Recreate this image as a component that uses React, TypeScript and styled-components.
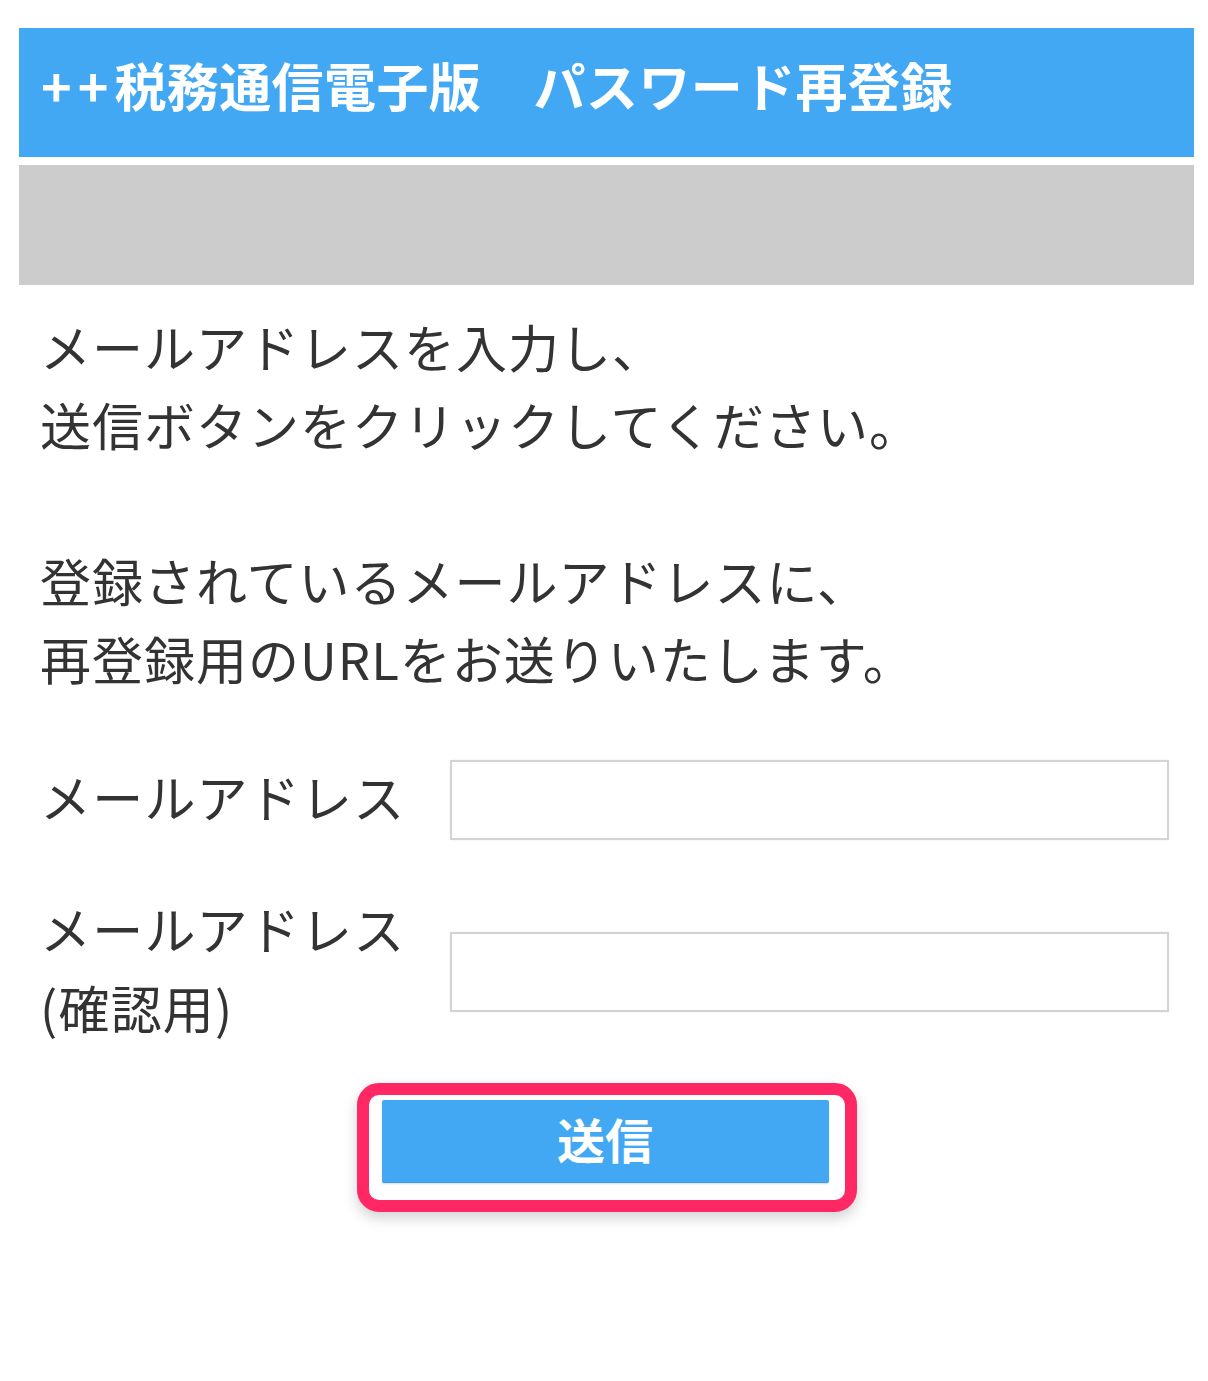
import React from 'react';
import styled, { createGlobalStyle } from 'styled-components';

const GlobalStyle = createGlobalStyle`
  html, body {
    margin: 0;
    padding: 0;
    background: #fff;
  }
  body {
    font-family: "Noto Sans CJK JP", "Noto Sans", sans-serif;
    color: #333;
  }
`;

const Page = styled.div`
  width: 1175px;
  margin: 28px 0 0 19px;
  padding-bottom: 160px;
`;

const TitleBar = styled.h1`
  box-sizing: border-box;
  margin: 0;
  height: 129px;
  display: flex;
  align-items: center;
  padding: 0 0 16px 22px;
  background: #42a8f4;
  color: #fff;
  font-size: 52px;
  font-weight: 700;
  letter-spacing: 0.4px;
  white-space: nowrap;
`;

const Plus = styled.span`
  letter-spacing: 6px;
`;

const SubBar = styled.div`
  margin-top: 8px;
  height: 120px;
  background: #cccccc;
`;

const Body = styled.div`
  padding: 22px 25px 0 21px;
`;

const Message = styled.p`
  margin: 0;
  font-size: 51px;
  line-height: 78px;
  letter-spacing: 1px;
  & + & {
    margin-top: 78px;
  }
`;

const Form = styled.form`
  margin-top: 63px;
  display: flex;
  flex-direction: column;
  gap: 57px;
`;

const Row = styled.div`
  display: flex;
  align-items: center;
`;

const Label = styled.label`
  width: 410px;
  flex-shrink: 0;
  margin-top: -8px;
  font-size: 51px;
  line-height: 79px;
  letter-spacing: 1.2px;
`;

const Field = styled.input`
  box-sizing: border-box;
  width: 719px;
  height: 80px;
  border: 2px solid #d4d4d4;
  box-shadow: 0 0 2px rgba(0, 0, 0, 0.08);
  background: #fff;
  font-size: 40px;
  padding: 0 12px;
  outline: none;
`;

const Actions = styled.div`
  margin-top: 36px;
  display: flex;
  justify-content: center;
  padding-left: 4px;
`;

// highlight frame drawn round the submit button
const Highlight = styled.div`
  padding: 5px 16px 17px 13px;
  border: 12px solid #ff2864;
  border-radius: 22px;
  background: #fff;
  box-shadow: 0 6px 14px rgba(0, 0, 0, 0.18);
`;

const SubmitButton = styled.button`
  display: block;
  width: 447px;
  height: 83px;
  padding: 0 0 8px;
  border: none;
  border-radius: 2px;
  background: #42a8f4;
  box-shadow: inset 0 -1px 0 rgba(0, 0, 0, 0.06), 0 1px 2px rgba(0, 0, 0, 0.15);
  color: #fff;
  font-family: inherit;
  font-size: 48px;
  font-weight: 700;
  cursor: pointer;
`;

export default function App() {
  return (
    <>
      <GlobalStyle />
      <Page>
        <TitleBar>
          <Plus>++</Plus>税務通信電子版　パスワード再登録
        </TitleBar>
        <SubBar />
        <Body>
          <Message>
            メールアドレスを入力し、
            <br />
            送信ボタンをクリックしてください。
          </Message>
          <Message>
            登録されているメールアドレスに、
            <br />
            再登録用のURLをお送りいたします。
          </Message>
          <Form onSubmit={e => e.preventDefault()}>
            <Row>
              <Label htmlFor="mail">メールアドレス</Label>
              <Field id="mail" type="email" />
            </Row>
            <Row>
              <Label htmlFor="mail-confirm">
                メールアドレス
                <br />
                (確認用)
              </Label>
              <Field id="mail-confirm" type="email" />
            </Row>
          </Form>
          <Actions>
            <Highlight>
              <SubmitButton type="submit">送信</SubmitButton>
            </Highlight>
          </Actions>
        </Body>
      </Page>
    </>
  );
}
